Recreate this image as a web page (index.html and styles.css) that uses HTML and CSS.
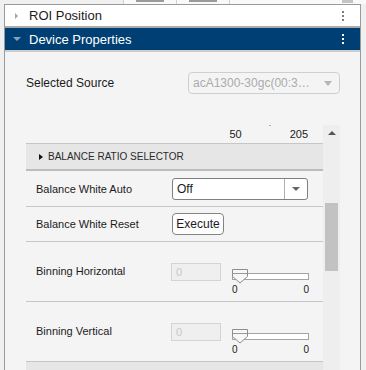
FILE: index.html
```html
<!DOCTYPE html>
<html lang="en">
<head>
  <meta charset="UTF-8" />
  <title>Device Properties</title>
  <link rel="stylesheet" href="styles.css">
</head>
<body>
  <div class="strip">
    <span class="cell first"></span>
    <span class="cell"><i class="frag"></i></span>
    <span class="cell"><i class="frag"></i></span>
    <span class="cell last"><i class="knob"></i></span>
  </div>

  <div class="panel">
    <div class="head roi">
      <span class="tri-box"><span class="tri-right"></span></span>
      <span class="title">ROI Position</span>
      <span class="dots"><i></i><i></i><i></i></span>
    </div>
    <div class="head dev">
      <span class="tri-box"><span class="tri-down"></span></span>
      <span class="title">Device Properties</span>
      <span class="dots"><i></i><i></i><i></i></span>
    </div>

    <div class="body">
      <div class="source-row">
        <span class="source-label">Selected Source</span>
        <div class="drop disabled">
          <span>acA1300-30gc(00:3…</span>
          <span class="arrow"></span>
        </div>
      </div>

      <div class="props">
        <div class="list">
          <div class="nums">
            <span class="n1">50</span>
            <span class="tick"></span>
            <span class="n2">205</span>
          </div>
          <div class="section"><span class="sec-tri"></span>BALANCE RATIO SELECTOR</div>

          <div class="prop short">
            <span class="name">Balance White Auto</span>
            <div class="drop enabled">
              <span class="value">Off</span>
              <span class="drop-btn"><span class="arrow"></span></span>
            </div>
          </div>

          <div class="prop reset">
            <span class="name">Balance White Reset</span>
            <button class="exec">Execute</button>
          </div>

          <div class="prop tall">
            <span class="name">Binning Horizontal</span>
            <div class="edit">0</div>
            <div class="slider">
              <div class="track"></div>
              <svg class="thumb" width="16" height="15" viewBox="0 0 16 15">
                <polygon points="0.5,0.5 15.5,0.5 15.5,7.5 8,14 0.5,7.5" fill="#f7f7f7" stroke="#8e8e8e" />
                <line x1="1" y1="4.5" x2="15" y2="4.5" stroke="#9a9a9a" />
              </svg>
              <div class="ticks"><span>0</span><span>0</span></div>
            </div>
          </div>

          <div class="prop tall">
            <span class="name">Binning Vertical</span>
            <div class="edit">0</div>
            <div class="slider">
              <div class="track"></div>
              <svg class="thumb" width="16" height="15" viewBox="0 0 16 15">
                <polygon points="0.5,0.5 15.5,0.5 15.5,7.5 8,14 0.5,7.5" fill="#f7f7f7" stroke="#8e8e8e" />
                <line x1="1" y1="4.5" x2="15" y2="4.5" stroke="#9a9a9a" />
              </svg>
              <div class="ticks"><span>0</span><span>0</span></div>
            </div>
          </div>

          <div class="section next"></div>
        </div>

        <div class="scroll">
          <div class="up"><span></span></div>
          <div class="thumb-bar"></div>
        </div>
      </div>
    </div>
  </div>
</body>
</html>
```

FILE: styles.css
```css
body {
  margin: 0;
  width: 366px;
  height: 370px;
  overflow: hidden;
  background: #f0f0f0;
  font-family: "Liberation Sans", Arial, sans-serif;
  color: #1b1b1b;
}

/* bottom edge of the table above */
.strip {
  display: flex;
  height: 4px;
}

.cell {
  width: 52px;
  border-left: 1px solid #d2d2d2;
  background: #f9f9f9;
  position: relative;
}

.cell.first {
  width: 123px;
  border-left: none;
  background: #f0f0f0;
}

.cell.last {
  flex: 1;
}

.frag {
  display: block;
  margin: 0 12px;
  height: 2px;
  background: #9a9a9a;
}

.knob {
  position: absolute;
  left: 112px;
  top: 0;
  width: 11px;
  height: 3px;
  background: #c4c4c4;
}

.panel {
  margin: 0 5px 0 4px;
  border: 1px solid #9a9a9a;
  border-bottom: none;
}

.head {
  display: flex;
  align-items: center;
  padding: 0 16px 0 10px;
  font-size: 13px;
}

.head.roi {
  height: 21px;
  background: #fff;
  border-bottom: 2px solid #ababab;
}

.head.dev {
  height: 22px;
  background: #003f73;
  color: #fff;
  border-bottom: 2px solid #cdcdcd;
}

.tri-box {
  width: 14px;
  display: flex;
  align-items: center;
}

.tri-right {
  border-left: 3px solid #a3a3a3;
  border-top: 3px solid transparent;
  border-bottom: 3px solid transparent;
}

.tri-down {
  margin-left: -2px;
  border-top: 4px solid #8aa1b8;
  border-left: 4px solid transparent;
  border-right: 4px solid transparent;
}

.title {
  flex: 1;
}

.dots {
  display: flex;
  flex-direction: column;
  gap: 2px;
}

.dots i {
  width: 2px;
  height: 2px;
  background: #7e7e7e;
}

.dev .dots i {
  background: #fff;
}

.body {
  height: 318px;
  overflow: hidden;
  background: #f4f4f4;
  padding: 20px 20px 0 21px;
  box-sizing: border-box;
}

.source-row {
  display: flex;
  justify-content: space-between;
  align-items: center;
  height: 22px;
  font-size: 12px;
}

.drop {
  display: flex;
  align-items: center;
  height: 22px;
  box-sizing: border-box;
  font-size: 12px;
}

.drop.disabled {
  width: 152px;
  border: 1px solid #cfcfcf;
  border-radius: 4px;
  padding-left: 4px;
  color: #ababab;
}

.drop.disabled .arrow {
  margin: 0 7px 0 auto;
  border-top-color: #b5b5b5;
}

.arrow {
  border-top: 5px solid #666;
  border-left: 4px solid transparent;
  border-right: 4px solid transparent;
}

.drop.enabled {
  width: 136px;
  background: #fff;
  border: 1px solid #808080;
  border-radius: 3px;
}

.value {
  flex: 1;
  padding-left: 4px;
}

.drop-btn {
  width: 22px;
  height: 100%;
  border-left: 1px solid #b0b0b0;
  display: flex;
  align-items: center;
  justify-content: center;
}

.drop-btn .arrow {
  border-top-width: 4px;
}

.props {
  display: flex;
  margin-top: 31px;
  height: 260px;
}

.list {
  width: 297px;
}

.nums {
  display: flex;
  justify-content: flex-end;
  height: 18px;
  border-bottom: 1px solid #c6c6c6;
  font-size: 11px;
  line-height: 14px;
  padding-right: 15px;
  box-sizing: content-box;
}

.nums span {
  padding-top: 2px;
}

.nums .tick {
  width: 2px;
  height: 1px;
  padding: 0;
  margin: 0 19px 0 27px;
  background: #b0b0b0;
}

.section {
  display: flex;
  align-items: center;
  height: 25px;
  padding-left: 13px;
  background: #e6e6e6;
  border-bottom: 2px solid #bcbcbc;
  font-size: 10px;
  color: #2a2a2a;
}

.section.next {
  border-bottom: none;
}

.sec-tri {
  margin-right: 5px;
  border-left: 4px solid #111;
  border-top: 3px solid transparent;
  border-bottom: 3px solid transparent;
}

.prop {
  display: flex;
  align-items: center;
  padding-left: 10px;
  border-bottom: 1px solid #c6c6c6;
}

.prop.short { height: 35px; }
.prop.reset { height: 34px; }
.prop.tall { height: 59px; align-items: flex-start; }

.name {
  width: 136px;
  font-size: 11px;
  flex-shrink: 0;
}

.tall .name {
  margin-top: 23px;
}

.exec {
  width: 52px;
  height: 22px;
  padding: 0;
  background: #fdfdfd;
  border: 1px solid #858585;
  border-radius: 4px;
  font-family: inherit;
  font-size: 12px;
  color: #1b1b1b;
}

.edit {
  width: 50px;
  height: 18px;
  box-sizing: border-box;
  margin: 21px 11px 0 -1px;
  padding-left: 4px;
  background: #efefef;
  border: 1px solid #d4d4d4;
  font-size: 11px;
  line-height: 16px;
  color: #c8c8c8;
}

.slider {
  position: relative;
  width: 77px;
  margin-top: 27px;
}

.track {
  height: 7px;
  margin-top: 4px;
  box-sizing: border-box;
  background: #fff;
  border: 1px solid #a3a3a3;
}

.thumb {
  position: absolute;
  left: 0;
  top: 0;
}

.ticks {
  display: flex;
  justify-content: space-between;
  margin-top: 4px;
  font-size: 10px;
  line-height: 12px;
}

.scroll {
  width: 17px;
  background: #eeeeee;
}

.up {
  height: 16px;
  display: flex;
  justify-content: center;
  align-items: center;
}

.up span {
  border-bottom: 4px solid #555;
  border-left: 4px solid transparent;
  border-right: 4px solid transparent;
}

.thumb-bar {
  margin: 62px 2px 0 2px;
  height: 68px;
  background: #c2c2c2;
}
```
